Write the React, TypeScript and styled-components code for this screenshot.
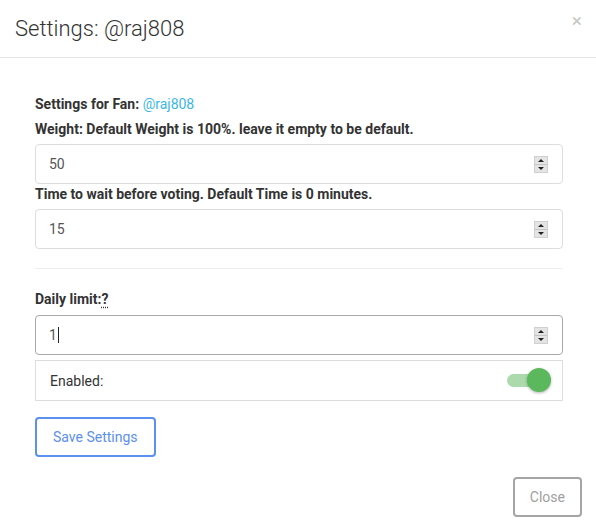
import React from 'react';
import styled, { createGlobalStyle } from 'styled-components';

const GlobalStyle = createGlobalStyle`
  html, body {
    margin: 0;
    padding: 0;
    background: #fff;
    font-family: Roboto, "Liberation Sans", Arial, sans-serif;
    color: #333;
  }
`;

const Modal = styled.div`
  width: 596px;
  height: 527px;
  display: flex;
  flex-direction: column;
  background: #fff;
`;

const Header = styled.div`
  display: flex;
  align-items: center;
  justify-content: space-between;
  padding: 13px 15px 13px 15px;
  border-bottom: 1px solid #e5e5e5;
`;

const Title = styled.h4`
  margin: 0;
  font-size: 22px;
  font-weight: 300;
  line-height: 31px;
  color: #333;
`;

const CloseX = styled.span`
  font-size: 19px;
  line-height: 1;
  color: #c8c8c8;
  margin: -17px -1px 0 0;
`;

const Body = styled.div`
  display: flex;
  flex-direction: column;
  padding: 36px 33px 0 35px;
`;

const Label = styled.div<{ gap?: number }>`
  font-size: 14px;
  font-weight: 700;
  line-height: 20px;
  color: #333;
  margin-bottom: ${({ gap }) => gap ?? 0}px;
`;

const Handle = styled.span`
  font-weight: 400;
  color: #3bb7e6;
`;

const Hint = styled.abbr`
  text-decoration: underline dotted;
  text-underline-offset: 3px;
  cursor: help;
`;

const Field = styled.div<{ focused?: boolean }>`
  height: 40px;
  box-sizing: border-box;
  display: flex;
  align-items: center;
  padding: 0 14px 0 13px;
  border: 1px solid ${({ focused }) => (focused ? '#a8a8a8' : '#ddd')};
  border-radius: 4px;
  font-size: 14px;
  color: #555;
`;

const Value = styled.span`
  flex: 1;
  display: flex;
  align-items: center;
`;

const Caret = styled.span`
  display: inline-block;
  width: 1px;
  height: 16px;
  margin-left: 1px;
  background: #222;
`;

const Spinner = styled.div`
  width: 14px;
  height: 17px;
  display: flex;
  flex-direction: column;
  background: #e4e4e4;
  border: 1px solid #d0d0d0;
  box-sizing: border-box;
`;

const SpinHalf = styled.div<{ down?: boolean }>`
  flex: 1;
  display: flex;
  align-items: center;
  justify-content: center;
  border-top: ${({ down }) => (down ? '1px solid #c4c4c4' : 'none')};
  &::after {
    content: '';
    border-left: 3px solid transparent;
    border-right: 3px solid transparent;
    ${({ down }) => (down ? 'border-top: 3px solid #222;' : 'border-bottom: 3px solid #222;')}
  }
`;

const Divider = styled.hr`
  border: 0;
  border-top: 1px solid #eee;
  margin: 19px 0 20px;
`;

const ToggleRow = styled.div`
  height: 41px;
  box-sizing: border-box;
  margin-top: 5px;
  display: flex;
  align-items: center;
  justify-content: space-between;
  padding: 0 12px 0 14px;
  border: 1px solid #ddd;
  font-size: 14px;
  color: #333;
`;

const Switch = styled.div<{ on: boolean }>`
  position: relative;
  width: 34px;
  height: 13px;
  border-radius: 7px;
  margin-right: 9px;
  background: ${({ on }) => (on ? '#acdaac' : '#ccc')};
  &::after {
    content: '';
    position: absolute;
    top: -6px;
    left: ${({ on }) => (on ? '20px' : '-6px')};
    width: 24px;
    height: 24px;
    border-radius: 50%;
    background: ${({ on }) => (on ? '#5cb85c' : '#f1f1f1')};
    box-shadow: 0 1px 3px rgba(0, 0, 0, 0.3);
  }
`;

const OutlineButton = styled.button<{ tone: 'primary' | 'muted' }>`
  align-self: ${({ tone }) => (tone === 'primary' ? 'flex-start' : 'flex-end')};
  height: 40px;
  padding: 0 ${({ tone }) => (tone === 'primary' ? '16px' : '15px')};
  background: #fff;
  border: 2px solid ${({ tone }) => (tone === 'primary' ? '#5b8ff0' : '#a5a5a5')};
  border-radius: 4px;
  font-family: inherit;
  font-size: 14px;
  color: ${({ tone }) => (tone === 'primary' ? '#5b8ff0' : '#a0a0a0')};
  cursor: pointer;
`;

const Footer = styled.div`
  display: flex;
  justify-content: flex-end;
  padding: 20px 14px 0 0;
`;

const NumberField = ({ value, focused }: { value: string, focused?: boolean }) => (
  <Field focused={focused}>
    <Value>
      {value}
      {focused && <Caret />}
    </Value>
    <Spinner>
      <SpinHalf />
      <SpinHalf down />
    </Spinner>
  </Field>
);

const App = () => (
  <>
    <GlobalStyle />
    <Modal>
      <Header>
        <Title>Settings: @raj808</Title>
        <CloseX>×</CloseX>
      </Header>
      <Body>
        <Label gap={5}>
          Settings for Fan:
          {' '}
          <Handle>@raj808</Handle>
        </Label>
        <Label gap={5}>Weight: Default Weight is 100%. leave it empty to be default.</Label>
        <NumberField value="50" />
        <Label gap={5}>Time to wait before voting. Default Time is 0 minutes.</Label>
        <NumberField value="15" />
        <Divider />
        <Label gap={6}>
          Daily limit:
          <Hint title="How many votes per day">?</Hint>
        </Label>
        <NumberField value="1" focused />
        <ToggleRow>
          Enabled:
          <Switch on />
        </ToggleRow>
        <OutlineButton tone="primary" style={{ marginTop: 16 }}>Save Settings</OutlineButton>
      </Body>
      <Footer>
        <OutlineButton tone="muted">Close</OutlineButton>
      </Footer>
    </Modal>
  </>
);

export default App;
